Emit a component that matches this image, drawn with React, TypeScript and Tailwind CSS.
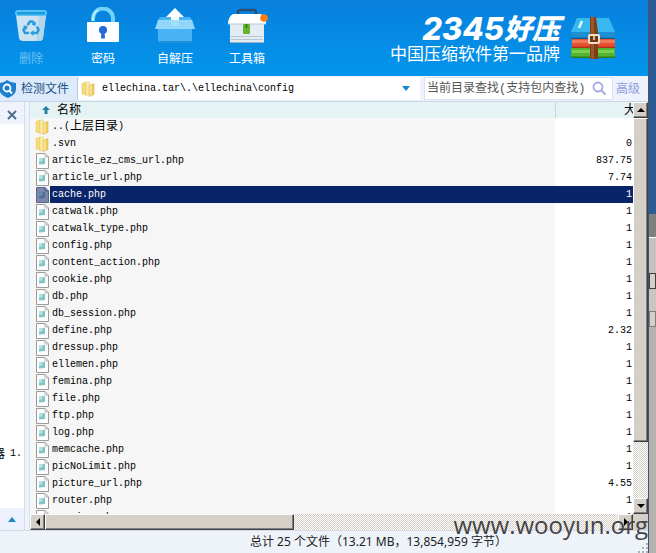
import React from "react";

const cjk = "font-['Noto_Sans','Noto_Sans_CJK_SC',sans-serif]";
const mono = "font-['Liberation_Mono','Noto_Sans_CJK_SC',monospace]";
const checker =
  "bg-[repeating-conic-gradient(#d4d0c8_0%_25%,#ffffff_0%_50%)] bg-[length:2px_2px]";
const raised =
  "bg-[#d4d0c8] border border-t-white border-l-white border-r-[#404040] border-b-[#404040] shadow-[inset_-1px_-1px_0_#808080]";

type Row = { name: string; size: string; folder?: boolean; selected?: boolean };

const rows: Row[] = [
  { name: ".svn", size: "0", folder: true },
  { name: "article_ez_cms_url.php", size: "837.75" },
  { name: "article_url.php", size: "7.74" },
  { name: "cache.php", size: "1", selected: true },
  { name: "catwalk.php", size: "1" },
  { name: "catwalk_type.php", size: "1" },
  { name: "config.php", size: "1" },
  { name: "content_action.php", size: "1" },
  { name: "cookie.php", size: "1" },
  { name: "db.php", size: "1" },
  { name: "db_session.php", size: "1" },
  { name: "define.php", size: "2.32" },
  { name: "dressup.php", size: "1" },
  { name: "ellemen.php", size: "1" },
  { name: "femina.php", size: "1" },
  { name: "file.php", size: "1" },
  { name: "ftp.php", size: "1" },
  { name: "log.php", size: "1" },
  { name: "memcache.php", size: "1" },
  { name: "picNoLimit.php", size: "1" },
  { name: "picture_url.php", size: "4.55" },
  { name: "router.php", size: "1" },
  { name: "service.php", size: "1" },
];

function FolderIcon() {
  return (
    <svg width="14" height="16" viewBox="0 0 14 16" className="block shrink-0">
      <path d="M1 2.500 5 1v13l-4-1z" fill="#f5dc7c" stroke="#e3c765" strokeWidth=".5" />
      <path d="M5 1h3.500v12.500L5 15z" fill="#fbedaa" stroke="#e3c765" strokeWidth=".5" />
      <path d="M8 4.500 13 2.500v11L8 15.500z" fill="#f0cf60" stroke="#d2ab3d" strokeWidth=".5" />
      <path d="M8.500 5 10.500 4v10l-2 1z" fill="#fae79a" />
    </svg>
  );
}

function FileIcon({ selected }: { selected?: boolean }) {
  return (
    <svg width="14" height="16" viewBox="0 0 14 16" className="block shrink-0">
      <path d="M1.500 .5h8.500L13.500 4v11.500h-12z" fill={selected ? "#7c87ae" : "#fdfdfd"} stroke={selected ? "#5a668f" : "#9a9a9a"} />
      <path d="M10 .5v3.500h3.500" fill="none" stroke={selected ? "#4d5a8c" : "#b4b4b4"} />
      <path d="M4 5.500 10 5v6l-6 .5z" fill={selected ? "#4f7095" : "#7fc5c6"} />
      <path d="M4 5.500 7.500 5.200v3L4 9z" fill={selected ? "#6c8cae" : "#b4e2e0"} />
    </svg>
  );
}

function TrashIcon() {
  return (
    <svg width="36" height="38" viewBox="0 0 36 38">
      <path d="M3 8h30l-3 23q-.5 3-4 3H10q-3.500 0-4-3z" fill="#c9e3f3" />
      <path d="M26 8h7l-3 23q-.5 3-4 3h-3z" fill="#b5d5ea" />
      <rect x="2" y="3" width="32" height="6" rx="3" fill="#55c4f4" />
      <rect x="4" y="5" width="28" height="2.500" rx="1" fill="#1a9ade" />
      <g fill="none" stroke="#2b9be0" strokeWidth="2.600">
        <path d="m14.500 18 2.500-3.500h2.500l2 3" />
        <path d="m24 19.500 1.500 3.500-1.500 3h-4" />
        <path d="M16 26h-4l-1.500-3 2-3.500" />
      </g>
      <path d="m23 14.500-.5 4.500-4-1.500zM20.500 23v6l-3.500-3zM10 18.500l4.500.5-1 4z" fill="#2b9be0" />
    </svg>
  );
}

function LockIcon() {
  return (
    <svg width="36" height="38" viewBox="0 0 36 38">
      <path d="M8 14v-2a10 10 0 0 1 20-1v5" fill="none" stroke="#6fd4f8" strokeWidth="4" />
      <path d="M8 14v-2a10 10 0 0 1 5-9" fill="none" stroke="#b4edff" strokeWidth="2" />
      <rect x="2" y="15" width="32" height="20" rx="1" fill="#fdfeff" />
      <circle cx="18" cy="23" r="4" fill="#2669d4" />
      <path d="M16.500 25h3l.5 6.500h-4z" fill="#2669d4" />
    </svg>
  );
}

function ExtractIcon() {
  return (
    <svg width="40" height="38" viewBox="0 0 40 38">
      <path d="M3 20h34v15H3z" fill="#49b4f5" />
      <path d="M3 34h34v2H3z" fill="#1f8edb" />
      <path d="M5 10h30l3 5H2z" fill="#49b4f5" />
      <path d="m20 1 9 9h-5v9h-8v-9h-5z" fill="#fff" />
      <path d="M3 13h34l3 9H0z" fill="#9bdcfc" opacity=".92" />
    </svg>
  );
}

function ToolboxIcon() {
  return (
    <svg width="42" height="38" viewBox="0 0 42 38">
      <path d="M12 9V5.500Q12 3 14.500 3h13Q30 3 30 5.500V9" fill="none" stroke="#2d4e73" strokeWidth="2.600" />
      <path d="M4 17h34v19H4z" fill="#e3ecf5" />
      <path d="M7 7h28q5 3 5 10H2Q2 10 7 7z" fill="#fff" />
      <path d="M2 17h38" stroke="#b7c7d5" />
      <path d="M5 29.500h32M5 32.500h32" stroke="#b7c3cf" />
      <path d="M4 35.500h34" stroke="#9eb2c5" />
      <rect x="17" y="17" width="7" height="10" rx="1" fill="#66b52f" />
      <path d="M20.500 17v4" stroke="#347012" strokeWidth="1.500" />
      <circle cx="38" cy="11" r="3.800" fill="#ff7c11" />
    </svg>
  );
}

function BooksIcon() {
  return (
    <svg width="46" height="44" viewBox="0 0 46 44" className="block">
      <path d="M7 1h32l6 14H1z" fill="#38b8ee" />
      <path d="M1 15h44v7H1z" fill="#1c90d2" />
      <path d="M1 20.500h44V22H1z" fill="#0b5f9b" />
      <path d="M2 22h43v9H2z" fill="#e9502e" />
      <path d="M2 23h43v3H2z" fill="#f27a58" />
      <path d="M2 29.500h43V31H2z" fill="#b5301a" />
      <path d="M1 31h44v10H1z" fill="#55b531" />
      <path d="M2 33h42v3H2z" fill="#7ccf50" />
      <path d="M1 39.500h44V41H1z" fill="#2e7d1d" />
      <path d="m12 4-3 7" stroke="#dff6ff" strokeWidth="2.500" />
      <path d="M20 0h6l2 15v27h-8V15z" fill="#7c3f1b" />
      <path d="M21 0h3v42h-3z" fill="#9a5529" />
      <rect x="19" y="18" width="10" height="8" rx="1" fill="#713613" stroke="#f3e2c7" strokeWidth="2" />
      <path d="M24 19v4" stroke="#f3e2c7" strokeWidth="1.500" />
    </svg>
  );
}

function Tool({ label, dim, children }: { label: string; dim?: boolean; children: React.ReactNode }) {
  return (
    <button className={`flex w-[72px] flex-col items-center text-[12px] leading-[16px] ${dim ? "text-[#6cc0f5]" : "text-white"}`}>
      <span className="flex h-[44px] items-end">{children}</span>
      <span className="mt-[6px]">{label}</span>
    </button>
  );
}

function Arrow({ d }: { d: string }) {
  return (
    <svg width="8" height="8" viewBox="0 0 8 8" className="block shrink-0">
      <path d={d} fill="#000" />
    </svg>
  );
}

function ScrollButton({ label, d }: { label: string; d: string }) {
  return (
    <button aria-label={label} className={`flex h-[16px] w-[15px] shrink-0 items-center justify-center ${raised}`}>
      <Arrow d={d} />
    </button>
  );
}

export default function App() {
  return (
    <div className={`relative flex h-screen overflow-hidden bg-[#eef2f9] ${cjk}`}>
      <div className="flex min-w-0 flex-1 flex-col">
        <header className="flex h-[74px] shrink-0 justify-between bg-linear-to-b from-[#0780dc] to-[#0595ec]">
          <div className="-ml-[5px] flex pt-[1px]">
            <Tool label="删除" dim><TrashIcon /></Tool>
            <Tool label="密码"><LockIcon /></Tool>
            <Tool label="自解压"><ExtractIcon /></Tool>
            <Tool label="工具箱"><ToolboxIcon /></Tool>
          </div>
          <div className="flex gap-[10px] pr-[32px] text-white">
            <div className="flex flex-col items-end pt-[15px]">
              <div className="flex items-center font-['Inter','Noto_Sans_CJK_SC',sans-serif] text-[31px] leading-[28px] font-extrabold italic">
                2345<span className="text-[28px]">好压</span>
              </div>
              <div className="text-[17px] leading-[22px]">中国压缩软件第一品牌</div>
            </div>
            <div className="pt-[17px]"><BooksIcon /></div>
          </div>
        </header>

        <div className="flex h-[28px] shrink-0 items-center border-t-2 border-b border-t-[#0595ec] border-b-[#c9d6e8] bg-[#eef2fc] text-[12px]">
          <button className="flex h-full w-[77px] shrink-0 items-center gap-[5px] bg-[#dcebfb] text-[12px] text-[#1c4f86]">
            <svg width="16" height="18" viewBox="0 0 16 18" className="block shrink-0">
              <path d="M-1 3Q4 3 7 0q4 3 9 3v6q0 6-8 9-8-3-9-9z" fill="#1c7fd0" />
              <circle cx="7" cy="8" r="3.500" fill="none" stroke="#fff" strokeWidth="1.800" />
              <path d="m9 10 3 3.500" stroke="#fff" strokeWidth="2" />
            </svg>
            <span className="whitespace-nowrap">检测文件</span>
          </button>
          <div className="flex h-[23px] min-w-0 flex-1 items-center border-l border-[#b9cbe4] bg-white pl-[3px]">
            <FolderIcon />
            <input aria-label="路径" defaultValue="ellechina.tar\.\ellechina\config" className={`ml-[7px] min-w-0 flex-1 text-[10px] text-black outline-none ${mono}`} />
            <button aria-label="展开" className="flex w-[28px] justify-center">
              <svg width="8" height="5" viewBox="0 0 8 5"><path d="M0 0h8L4 5z" fill="#1c86c8" /></svg>
            </button>
          </div>
          <div className="ml-[4px] flex h-[23px] w-[189px] shrink-0 items-center border border-[#dce3f0] bg-white pl-[2px]">
            <input aria-label="查找" placeholder="当前目录查找(支持包内查找)" className={`min-w-0 flex-1 text-[12px] outline-none placeholder:text-[#555] ${mono}`} />
            <button aria-label="搜索" className="w-[20px]">
              <svg width="15" height="15" viewBox="0 0 15 15"><circle cx="6" cy="6" r="4.500" fill="none" stroke="#a4a8e6" strokeWidth="1.800" /><path d="m9.500 9.500 4 4" stroke="#a4a8e6" strokeWidth="2.200" /></svg>
            </button>
          </div>
          <a href="#" className="w-[35px] shrink-0 pl-[3px] text-[#8d9be0]">高级</a>
        </div>

        <div className="flex min-h-0 flex-1">
          <aside className="flex w-[25px] shrink-0 flex-col border-r border-[#d3dcec] bg-white">
            <button aria-label="关闭" className="flex h-[22px] items-center justify-center bg-[#f0f3fc] pt-[4px]">
              <svg width="10" height="10" viewBox="0 0 10 10"><path d="m1 1 8 8M9 1 1 9" stroke="#4f6e92" strokeWidth="2" /></svg>
            </button>
            <div className="flex min-h-0 flex-1 items-end justify-end overflow-hidden pr-[2px] pb-[46px] text-[12px] leading-[16px]">
              <span className="flex items-center gap-[5px]">器<span className={`text-[10px] ${mono}`}>1.</span></span>
            </div>
            <button aria-label="展开面板" className="flex h-[22px] items-center justify-center bg-[#edf1fb]">
              <svg width="8" height="5" viewBox="0 0 8 5"><path d="M0 5h8L4 0z" fill="#1c86c8" /></svg>
            </button>
          </aside>

          <main className="ml-[4px] flex min-w-0 flex-1 flex-col border-l border-[#d8dfe8]">
            <div className="flex min-h-0 flex-1">
              <div className="min-w-0 flex-1 overflow-hidden bg-white">
                <table className="w-full table-fixed border-collapse text-black">
                  <colgroup><col /><col className="w-[78px]" /></colgroup>
                  <thead>
                    <tr className="h-[16px] bg-[#e6f3f5] text-[12px] leading-[16px]">
                      <th className="border-r border-[#c6d5de] p-0 text-left font-normal">
                        <span className="flex h-[16px] items-center pl-[12px]">
                          <svg width="8" height="8" viewBox="0 0 8 8"><path d="m4 0 4 4H5.500v4h-3V4H0z" fill="#2a7fa3" /></svg>
                          <span className="ml-[7px]">名称</span>
                        </span>
                      </th>
                      <th className="p-0 font-normal">
                        <span className="ml-auto block h-[16px] w-[9px] overflow-hidden whitespace-nowrap">大小</span>
                      </th>
                    </tr>
                  </thead>
                  <tbody className={mono}>
                    <tr className="h-[17px]">
                      <td className="bg-[#f6f6f6] p-0">
                        <span className="flex h-[17px] items-center gap-[1px] pl-[5px] text-[10px] leading-[16px]">
                          <FolderIcon /><span className="flex items-center pl-[2px]">..(<span className="text-[12px]">上层目录</span>)</span>
                        </span>
                      </td>
                      <td className="p-0" />
                    </tr>
                    {rows.map((r) => (
                      <tr key={r.name} className={`h-[17px] text-[10px] leading-[17px] ${r.selected ? "text-white" : ""}`}>
                        <td className="bg-[#f6f6f6] p-0">
                          <span className="flex h-[17px] items-center gap-[1px] pl-[5px]">
                            {r.folder ? <FolderIcon /> : <FileIcon selected={r.selected} />}
                            <span className={`flex-1 pl-[2px] ${r.selected ? "bg-[#0a246a]" : ""}`}>{r.name}</span>
                          </span>
                        </td>
                        <td className={`p-0 pr-[1px] text-right ${r.selected ? "bg-[#0a246a]" : ""}`}>{r.size}</td>
                      </tr>
                    ))}
                  </tbody>
                </table>
              </div>
              <div className={`flex w-[15px] shrink-0 flex-col ${checker}`}>
                <ScrollButton label="向上" d="M0 6h8L4 2z" />
                <div className={`h-[324px] ${raised}`} />
                <div className="flex-1" />
                <ScrollButton label="向下" d="M0 2h8L4 6z" />
              </div>
            </div>
            <div className={`flex h-[16px] shrink-0 ${checker}`}>
              <ScrollButton label="向左" d="M6 0v8L2 4z" />
              <div className={`w-[249px] ${raised}`} />
              <div className="flex-1" />
              <ScrollButton label="向右" d="M2 0v8l4-4z" />
              <div className="w-[15px] bg-[#d4d0c8]" />
            </div>
          </main>
        </div>

        <footer className="flex h-[23px] shrink-0 items-center border-t border-[#d5dce8] pl-[250px] text-[12px] leading-[16px] text-[#222]">
          <span className="whitespace-nowrap">总计 25 个文件（13.21 MB，13,854,959 字节）</span>
          <svg width="10" height="10" viewBox="0 0 10 10" className="ml-auto self-end">
            <path d="M8 0h2v2H8zM8 4h2v2H8zM8 8h2v2H8zM4 4h2v2H4zM4 8h2v2H4zM0 8h2v2H0z" fill="#b0b4ba" />
          </svg>
        </footer>
      </div>

      <div className="flex w-[8px] shrink-0 flex-col border-l border-[#44536a] bg-[#b5b3ae]">
        <div className="h-[214px] bg-[#2c5a94]" />
        <div className="h-[23px] bg-[#7f7f7f]" />
        <div className="h-[36px] border-t border-white bg-[#c5c2bd]" />
        <div className="h-[16px] border border-[#404040] bg-[#d4d0c8]" />
        <div className="h-[22px] bg-[#c9c6c0]" />
        <div className="h-[16px] border border-[#808080] bg-[#d4d0c8]" />
      </div>

      <div className="pointer-events-none absolute right-[8px] bottom-[12px] font-['Open_Sans',sans-serif] text-[24px] leading-[32px] text-[#444]">
        www.wooyun.org
      </div>
    </div>
  );
}
